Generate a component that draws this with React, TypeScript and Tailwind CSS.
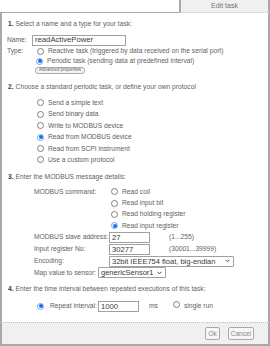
import React from "react";

const font = { fontFamily: '"Liberation Sans", Arial, sans-serif' };

function Radio({ checked }: { checked?: boolean }) {
  return checked ? (
    <span className="inline-flex h-[7px] w-[7px] shrink-0 items-center justify-center rounded-full border border-[#6aa6f2] bg-white">
      <span className="h-[4px] w-[4px] rounded-full bg-[#1a6ff0]" />
    </span>
  ) : (
    <span className="inline-block h-[7px] w-[7px] shrink-0 rounded-full border border-[#808080] bg-white" />
  );
}

function RadioRow({ checked, label, h, pl }: { checked?: boolean; label: string; h: string; pl: string }) {
  return (
    <div className={`flex items-center ${h} ${pl}`}>
      <Radio checked={checked} />
      <span className="ml-[4px]">{label}</span>
    </div>
  );
}

function Input({ value, w }: { value: string; w: string }) {
  return (
    <div className={`flex h-[11px] ${w} items-center border border-[#a0a0a0] bg-white pl-[2px] text-[7.7px] text-[#3a3a3a]`}>
      {value}
    </div>
  );
}

function Select({ value, w }: { value: string; w: string }) {
  return (
    <div className={`flex h-[11px] ${w} items-center justify-between rounded-[1px] border border-[#a0a0a0] bg-white pl-[2px] pr-[3px] text-[7.5px] text-[#3a3a3a]`}>
      <span>{value}</span>
      <svg width="5" height="4" viewBox="0 0 5 4">
        <path d="M0.5 0.8 L2.5 2.8 L4.5 0.8" fill="none" stroke="#444" strokeWidth="1" />
      </svg>
    </div>
  );
}

function Title({ n, text, h }: { n: string; text: string; h: string }) {
  return (
    <div className={`flex items-center ${h} pl-[6px]`}>
      <span className="font-bold text-[#3a3a3a]">{n}.</span>
      <span className="ml-[2px]">{text}</span>
    </div>
  );
}

export default function App() {
  return (
    <div className="flex h-[346px] w-[270px] flex-col bg-white text-[6.7px] text-[#626262]" style={font}>
      <div className="flex h-[13px] shrink-0">
        <div className="flex-1 border-b border-[#a8a8a8]" />
        <div className="flex w-[91px] items-center justify-center border-b border-l-2 border-r-2 border-dotted border-b-[#c8c8c8] border-l-[#a8a8a8] border-r-[#a8a8a8] bg-[#f0f0f0] text-[7px] text-[#707070]" style={{ borderLeftStyle: "solid", borderRightStyle: "solid" }}>
          Edit task
        </div>
      </div>
      <div className="flex flex-1 flex-col border-l-2 border-r-2 border-[#a8a8a8]">
        <div className="h-[5px]" />
        <Title n="1" text="Select a name and a type for your task:" h="h-[12px]" />
        <div className="h-[4px]" />
        <div className="flex h-[12px] items-center pl-[5px]">
          <span className="w-[25px]">Name:</span>
          <Input value="readActivePower" w="w-[94px]" />
        </div>
        <div className="flex h-[10px] items-center pl-[5px]">
          <span className="w-[30px]">Type:</span>
          <Radio />
          <span className="ml-[4px]">Reactive task (triggered by data received on the serial port)</span>
        </div>
        <RadioRow checked label="Periodic task (sending data at predefined interval)" h="h-[10px]" pl="pl-[34px]" />
        <div className="flex h-[9px] items-center pl-[33px]">
          <div className="flex h-[7px] items-center rounded-[3px] border border-[#aaa] bg-[#f4f4f4] px-[3px] text-[4.6px] text-[#666]">
            Advanced properties
          </div>
        </div>
        <div className="h-[6px]" />
        <Title n="2" text="Choose a standard periodic task, or define your own protocol" h="h-[12px]" />
        <div className="h-[4.3px]" />
        {[
          ["Send a simple text", false],
          ["Send binary data", false],
          ["Write to MODBUS device", false],
          ["Read from MODBUS device", true],
          ["Read from SCPI instrument", false],
          ["Use a custom protocol", false],
        ].map(([l, c]) => (
          <RadioRow key={l as string} checked={c as boolean} label={l as string} h="h-[11.4px]" pl="pl-[35px]" />
        ))}
        <div className="h-[5.3px]" />
        <Title n="3" text="Enter the MODBUS message details:" h="h-[12px]" />
        <div className="h-[3.3px]" />
        <div className="flex pl-[32px]">
          <div className="flex h-[11.3px] w-[77px] items-center">MODBUS command:</div>
          <div className="flex flex-col">
            <RadioRow label="Read coil" h="h-[11.3px]" pl="pl-[0px]" />
            <RadioRow label="Read input bit" h="h-[11.3px]" pl="pl-[0px]" />
            <RadioRow label="Read holding register" h="h-[11.3px]" pl="pl-[0px]" />
            <RadioRow checked label="Read input register" h="h-[11.3px]" pl="pl-[0px]" />
          </div>
        </div>
        <div className="flex h-[12px] items-center pl-[32px]">
          <span className="w-[75px]">MODBUS slave address:</span>
          <Input value="27" w="w-[41px]" />
          <span className="ml-[19px]">(1...255)</span>
        </div>
        <div className="flex h-[12px] items-center pl-[32px]">
          <span className="w-[75px]">Input register No:</span>
          <Input value="30277" w="w-[41px]" />
          <span className="ml-[19px]">(30001...39999)</span>
        </div>
        <div className="flex h-[12px] items-center pl-[32px]">
          <span className="w-[75px]">Encoding:</span>
          <Select value="32bit IEEE754 float, big-endian" w="w-[125px]" />
        </div>
        <div className="flex h-[11px] items-center pl-[32px]">
          <span className="w-[64px]">Map value to sensor:</span>
          <Select value="genericSensor1" w="w-[68px]" />
        </div>
        <div className="h-[5px]" />
        <Title n="4" text="Enter the time interval between repeated executions of this task:" h="h-[12px]" />
        <div className="h-[5px]" />
        <div className="flex h-[12px] items-center pl-[35px]">
          <Radio checked />
          <span className="ml-[6px] w-[48px]">Repeat interval:</span>
          <Input value="1000" w="w-[41px]" />
          <span className="ml-[10px]">ms</span>
          <span className="ml-[15px]"><Radio /></span>
          <span className="ml-[4px]">single run</span>
        </div>
        <div className="flex-1" />
      </div>
      <div className="flex h-[24px] shrink-0 items-center justify-end gap-[8px] border-b-2 border-l-2 border-r-2 border-t border-[#a8a8a8] border-t-[#c0c0c0] bg-[#f0f0f0] pr-[14px]" style={{ borderTopStyle: "dotted" }}>
        <div className="flex h-[13px] items-center rounded-[2px] border border-[#aaa] bg-[#f6f6f6] px-[2px] text-[6.5px] text-[#888]">Ok</div>
        <div className="flex h-[13px] items-center rounded-[2px] border border-[#aaa] bg-[#f6f6f6] px-[2px] text-[6.5px] text-[#888]">Cancel</div>
      </div>
    </div>
  );
}
